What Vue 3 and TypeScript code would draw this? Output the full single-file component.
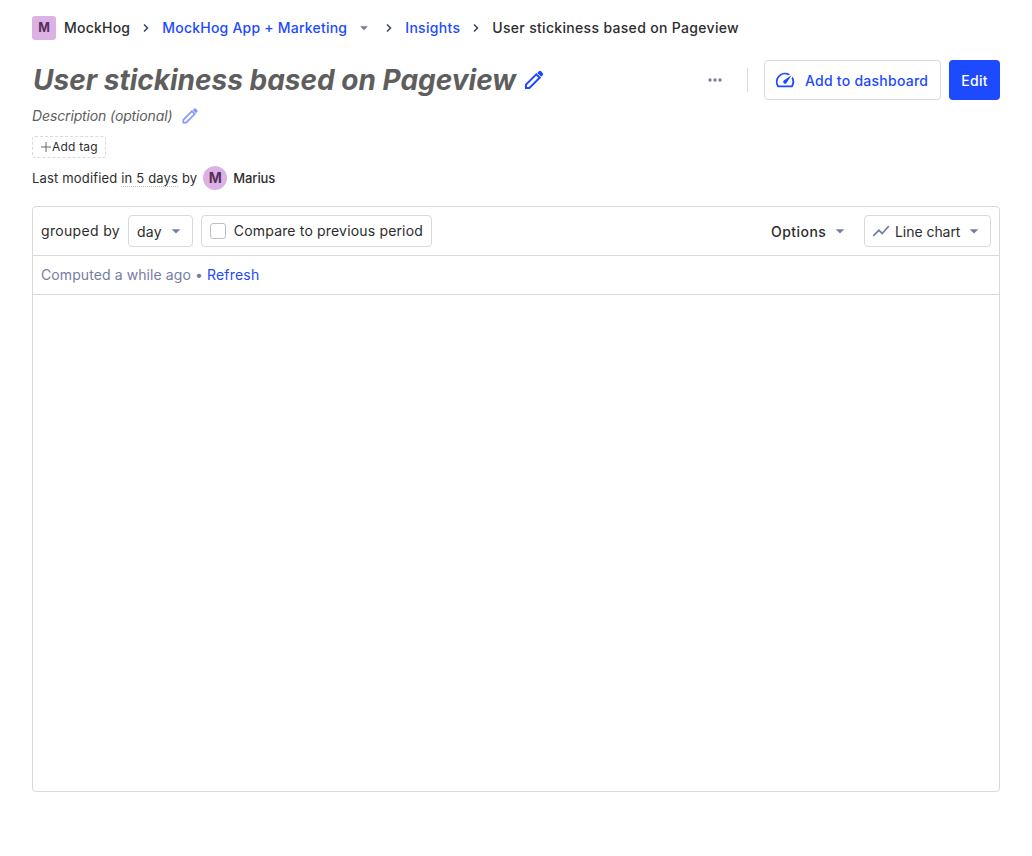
<script setup lang="ts">
import { ref } from 'vue'

const title = 'User stickiness based on Pageview'
const compare = ref<boolean>(false)
const pencilBody = 'M4 20v-3.4L14.3 6.3l3.4 3.4L7.4 20z'
const pencilTip = 'M15.3 4.9l1.8-1.8a1.2 1.2 0 0 1 1.7 0l2.1 2.1a1.2 1.2 0 0 1 0 1.7l-1.8 1.8z'
const caret = 'M6.8 9.8l5.2 5.2 5.2-5.2z'
const chevron = 'M6 4.5l3.5 3.5L6 11.5'
</script>

<template>
  <main class="page">
    <nav class="crumbs">
      <span class="logo">M</span>
      <span class="crumb org">MockHog</span>
      <svg class="chevron" viewBox="0 0 16 16"><path :d="chevron" /></svg>
      <a class="crumb link project">MockHog App + Marketing</a>
      <svg class="caret small" viewBox="0 0 24 24"><path :d="caret" /></svg>
      <svg class="chevron" viewBox="0 0 16 16"><path :d="chevron" /></svg>
      <a class="crumb link">Insights</a>
      <svg class="chevron" viewBox="0 0 16 16"><path :d="chevron" /></svg>
      <span class="crumb current">{{ title }}</span>
    </nav>

    <header class="head">
      <h1>{{ title }}</h1>
      <svg class="edit-title" viewBox="0 0 24 24">
        <path class="outline" :d="pencilBody" /><path :d="pencilTip" />
      </svg>
      <div class="actions">
        <svg class="more" viewBox="0 0 24 24">
          <circle cx="6" cy="12" r="2" /><circle cx="12" cy="12" r="2" /><circle cx="18" cy="12" r="2" />
        </svg>
        <span class="divider"></span>
        <button class="btn dashboard">
          <svg viewBox="0 0 24 24">
            <path d="M20.38 8.57l-1.23 1.85a8 8 0 0 1-.22 7.58H5.07A8 8 0 0 1 15.58 6.85l1.85-1.23A10 10 0 0 0 3.35 19a2 2 0 0 0 1.72 1h13.85a2 2 0 0 0 1.74-1 10 10 0 0 0-.27-10.44z" />
            <path d="M10.59 15.41a2 2 0 0 0 2.83 0l5.66-8.49-8.49 5.66a2 2 0 0 0 0 2.83z" />
          </svg>
          <span>Add to dashboard</span>
        </button>
        <button class="btn primary"><span>Edit</span></button>
      </div>
    </header>

    <div class="description">
      <em>Description (optional)</em>
      <svg viewBox="0 0 24 24">
        <path class="outline" :d="pencilBody" /><path :d="pencilTip" />
      </svg>
    </div>

    <button class="tag">
      <svg viewBox="0 0 10 10"><path d="M5 0v10M0 5h10" /></svg>
      <span>Add tag</span>
    </button>

    <div class="modified">
      <span class="when">Last modified <span class="dotted">in 5 days</span> by</span>
      <span class="avatar">M</span>
      <strong>Marius</strong>
    </div>

    <section class="card">
      <div class="toolbar">
        <span class="grouped">grouped by</span>
        <button class="control interval">
          <span>day</span>
          <svg class="caret" viewBox="0 0 24 24"><path :d="caret" /></svg>
        </button>
        <label class="control compare" @click="compare = !compare">
          <span class="box" :class="{ checked: compare }"></span>
          <span>Compare to previous period</span>
        </label>
        <button class="options">
          <span>Options</span>
          <svg class="caret" viewBox="0 0 24 24"><path :d="caret" /></svg>
        </button>
        <button class="control chart">
          <svg class="line" viewBox="0 0 24 24">
            <path d="M3.5 18.49l6-6.01 4 4L22 6.92l-1.41-1.41-7.09 7.97-4-4L2 16.99z" />
          </svg>
          <span>Line chart</span>
          <svg class="caret" viewBox="0 0 24 24"><path :d="caret" /></svg>
        </button>
      </div>
      <div class="computed">Computed a while ago <span>•</span> <a>Refresh</a></div>
      <div class="canvas"></div>
    </section>
  </main>
</template>

<style>
body {
  background: #fff;
}
</style>

<style scoped>
.page {
  box-sizing: border-box;
  height: 856px;
  padding: 16px 32px 64px;
  display: flex;
  flex-direction: column;
  font-family: Inter, 'Liberation Sans', sans-serif;
  font-size: 14px;
  line-height: 20px;
  color: #2d2d2d;
  white-space: nowrap;
}
svg {
  flex: none;
  display: block;
  fill: currentColor;
}
.outline {
  fill: none;
  stroke: currentColor;
  stroke-width: 2;
}
button {
  box-sizing: border-box;
  margin: 0;
  padding: 0;
  font: inherit;
  letter-spacing: inherit;
  color: inherit;
  background: none;
  border: 0;
}
.crumbs {
  display: flex;
  align-items: center;
  height: 24px;
  font-weight: 500;
  letter-spacing: 0.3px;
}
.logo {
  width: 24px;
  height: 24px;
  margin-right: 8px;
  border-radius: 3px;
  background: #dcb1e3;
  color: #572e5e;
  font-size: 12.5px;
  font-weight: 700;
  line-height: 24px;
  text-align: center;
  letter-spacing: 0;
}
.org,
.project {
  letter-spacing: 0.22px;
}
.current {
  letter-spacing: 0.32px;
}
.chevron {
  width: 16px;
  height: 16px;
  margin: 0 8px;
  fill: none;
  stroke: #35416b;
  stroke-width: 1.5;
}
.link {
  color: #1d4aff;
}
.caret {
  width: 20px;
  height: 20px;
  color: #747ea2;
}
.caret.small {
  width: 18px;
  height: 18px;
  margin-left: 8px;
}
.head {
  display: flex;
  align-items: center;
  height: 40px;
  margin-top: 20px;
}
h1 {
  margin: 0;
  padding-left: 1px;
  font-size: 28px;
  line-height: 40px;
  font-weight: 700;
  font-style: italic;
  color: #5e5e5e;
}
.edit-title {
  width: 24px;
  height: 24px;
  margin-left: 6px;
  color: #1d4aff;
}
.actions {
  display: flex;
  align-items: center;
  margin-left: auto;
}
.more {
  width: 20px;
  height: 20px;
  color: #747ea2;
}
.divider {
  width: 1px;
  height: 24px;
  margin: 0 16px 0 22px;
  background: #d9d9d9;
}
.btn {
  height: 40px;
  border-radius: 4px;
  font-weight: 500;
  letter-spacing: 0.25px;
}
.btn span {
  position: relative;
  top: 1px;
}
.dashboard {
  display: flex;
  align-items: center;
  width: 177px;
  margin-right: 8px;
  padding-left: 9px;
  border: 1px solid #d9d9d9;
  color: #1d4aff;
}
.dashboard svg {
  width: 22px;
  height: 22px;
  margin-right: 9px;
}
.primary {
  width: 51px;
  background: #1d4aff;
  color: #fff;
}
.description {
  display: flex;
  align-items: center;
  height: 20px;
  margin-top: 6px;
  color: #5e5e5e;
}
.description em {
  letter-spacing: -0.13px;
}
.description svg {
  width: 20px;
  height: 20px;
  margin-left: 8px;
  color: #8398ff;
}
.tag {
  display: flex;
  align-items: center;
  align-self: flex-start;
  width: 74px;
  height: 22px;
  margin-top: 10px;
  padding-left: 8px;
  border: 1px dashed #d9d9d9;
  border-radius: 3px;
  font-size: 12px;
  letter-spacing: 0.2px;
}
.tag svg {
  width: 10px;
  height: 10px;
  margin-right: 1px;
  stroke: #666;
  stroke-width: 1;
}
.modified {
  display: flex;
  align-items: center;
  height: 24px;
  margin-top: 8px;
  font-size: 13px;
}
.when {
  letter-spacing: 0.17px;
}
.dotted {
  border-bottom: 1px dotted #bbb;
}
.avatar {
  width: 24px;
  height: 24px;
  margin: 0 6px;
  border-radius: 50%;
  background: #dcb1e3;
  color: #572e5e;
  font-size: 14px;
  font-weight: 700;
  line-height: 24px;
  text-align: center;
}
.modified strong {
  font-weight: 500;
  letter-spacing: -0.1px;
}
.card {
  box-sizing: border-box;
  flex: 1;
  display: flex;
  flex-direction: column;
  margin-top: 16px;
  border: 1px solid #d9d9d9;
  border-radius: 4px;
}
.toolbar {
  display: flex;
  align-items: center;
  height: 48px;
  padding: 0 8px;
  border-bottom: 1px solid #d9d9d9;
}
.grouped {
  width: 87px;
  letter-spacing: 0.33px;
}
.control {
  box-sizing: border-box;
  display: flex;
  align-items: center;
  height: 32px;
  padding: 0 8px;
  border: 1px solid #d9d9d9;
  border-radius: 4px;
}
.interval {
  width: 65px;
  justify-content: space-between;
  padding-right: 6px;
  margin-right: 8px;
  letter-spacing: 0.25px;
}
.interval span,
.options span,
.chart span {
  position: relative;
  top: 1px;
}
.compare {
  width: 231px;
  letter-spacing: 0.17px;
}
.box {
  box-sizing: border-box;
  width: 16px;
  height: 16px;
  margin-right: 8px;
  border: 1px solid #bfbfbf;
  border-radius: 3px;
}
.box.checked {
  background: #1d4aff;
}
.options {
  display: flex;
  align-items: center;
  width: 79px;
  justify-content: space-between;
  margin: 0 14px 0 auto;
  font-weight: 500;
  letter-spacing: 0.45px;
}
.chart {
  width: 127px;
  padding-right: 6px;
}
.chart span {
  letter-spacing: -0.05px;
}
.line {
  width: 20px;
  height: 20px;
  margin: 0 4px 0 -2px;
  color: #747ea2;
}
.chart .caret {
  margin-left: auto;
}
.computed {
  height: 38px;
  padding: 0 8px;
  border-bottom: 1px solid #d9d9d9;
  color: #747ea2;
  line-height: 38px;
  letter-spacing: 0.09px;
}
.computed a {
  color: #1d4aff;
  letter-spacing: 0.2px;
}
.canvas {
  flex: 1;
}
</style>
